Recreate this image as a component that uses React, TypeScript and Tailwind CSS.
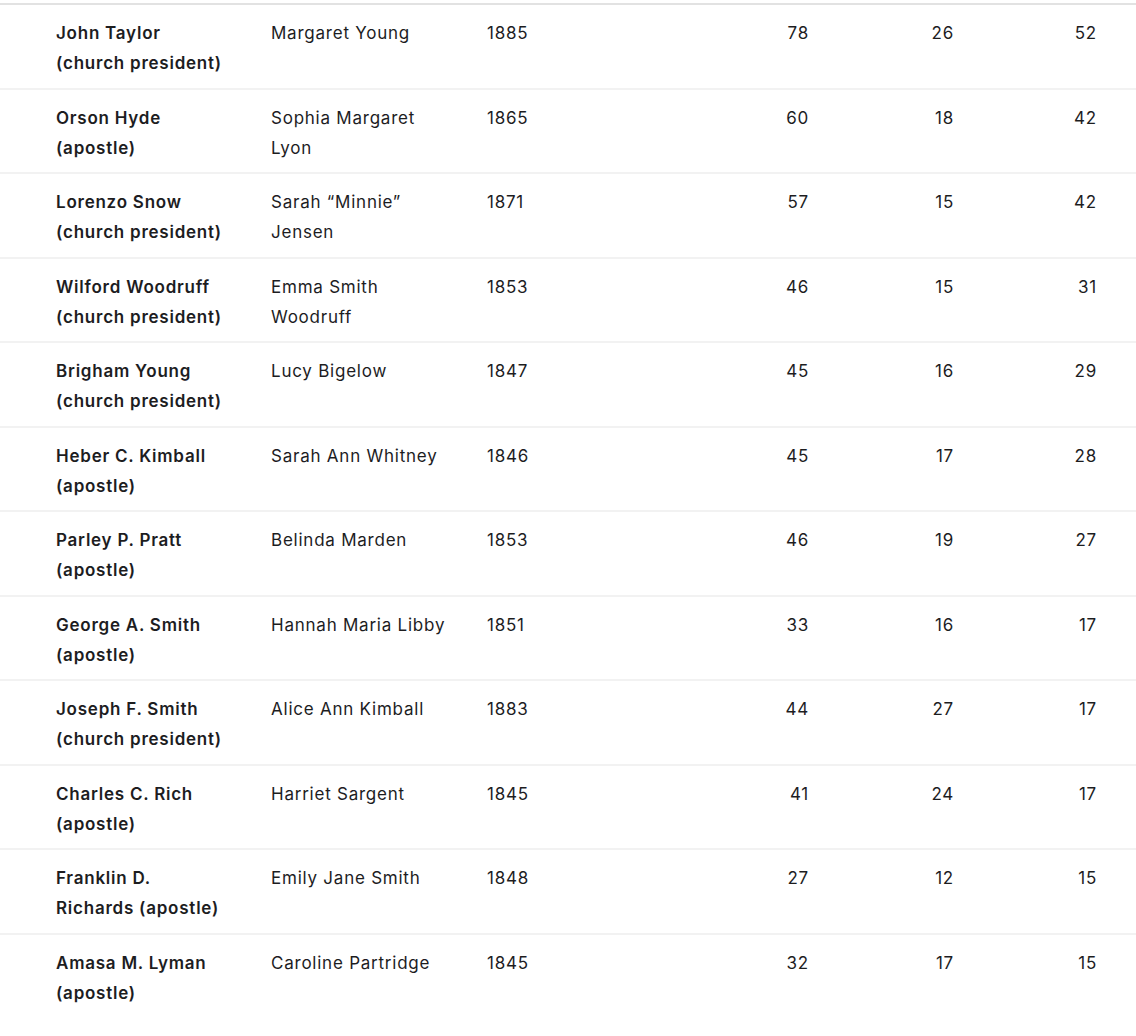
import React from 'react';

interface Row {
  leader: string;
  wife: string;
  year: string;
  leaderAge: string;
  wifeAge: string;
  gap: string;
}

const rows: Row[] = [
  { leader: 'John Taylor (church president)', wife: 'Margaret Young', year: '1885', leaderAge: '78', wifeAge: '26', gap: '52' },
  { leader: 'Orson Hyde (apostle)', wife: 'Sophia Margaret Lyon', year: '1865', leaderAge: '60', wifeAge: '18', gap: '42' },
  { leader: 'Lorenzo Snow (church president)', wife: 'Sarah \u201cMinnie\u201d Jensen', year: '1871', leaderAge: '57', wifeAge: '15', gap: '42' },
  { leader: 'Wilford Woodruff (church president)', wife: 'Emma Smith Woodruff', year: '1853', leaderAge: '46', wifeAge: '15', gap: '31' },
  { leader: 'Brigham Young (church president)', wife: 'Lucy Bigelow', year: '1847', leaderAge: '45', wifeAge: '16', gap: '29' },
  { leader: 'Heber C. Kimball (apostle)', wife: 'Sarah Ann Whitney', year: '1846', leaderAge: '45', wifeAge: '17', gap: '28' },
  { leader: 'Parley P. Pratt (apostle)', wife: 'Belinda Marden', year: '1853', leaderAge: '46', wifeAge: '19', gap: '27' },
  { leader: 'George A. Smith (apostle)', wife: 'Hannah Maria Libby', year: '1851', leaderAge: '33', wifeAge: '16', gap: '17' },
  { leader: 'Joseph F. Smith (church president)', wife: 'Alice Ann Kimball', year: '1883', leaderAge: '44', wifeAge: '27', gap: '17' },
  { leader: 'Charles C. Rich (apostle)', wife: 'Harriet Sargent', year: '1845', leaderAge: '41', wifeAge: '24', gap: '17' },
  { leader: 'Franklin D. Richards (apostle)', wife: 'Emily Jane Smith', year: '1848', leaderAge: '27', wifeAge: '12', gap: '15' },
  { leader: 'Amasa M. Lyman (apostle)', wife: 'Caroline Partridge', year: '1845', leaderAge: '32', wifeAge: '17', gap: '15' },
];

const App: React.FC = () => {
  return (
    <div
      className="w-[1136px] h-[1036px] overflow-hidden bg-white pt-[3px] text-[17px] leading-[30px] tracking-[0.045em] text-[#1d1d1f]"
      style={{ fontFamily: 'Inter, "Noto Sans", sans-serif' }}
    >
      <div className="border-t-2 border-[#e2e2e2]">
        {rows.map((r, i) => (
          <div
            key={i}
            className={
              'grid grid-cols-[215px_216px_209px_145px_145px_143px] pl-10 pt-[13px] pb-[9.5px] ' +
              (i > 0 ? 'border-t-2 border-[#f2f2f2]' : '')
            }
          >
            <div className="min-h-[60px] pl-4 pr-[28px] font-semibold">{r.leader}</div>
            <div className="px-4">{r.wife}</div>
            <div className="px-4">{r.year}</div>
            <div className="px-4 text-right">{r.leaderAge}</div>
            <div className="px-4 text-right">{r.wifeAge}</div>
            <div className="px-4 text-right">{r.gap}</div>
          </div>
        ))}
      </div>
    </div>
  );
};

export default App;
